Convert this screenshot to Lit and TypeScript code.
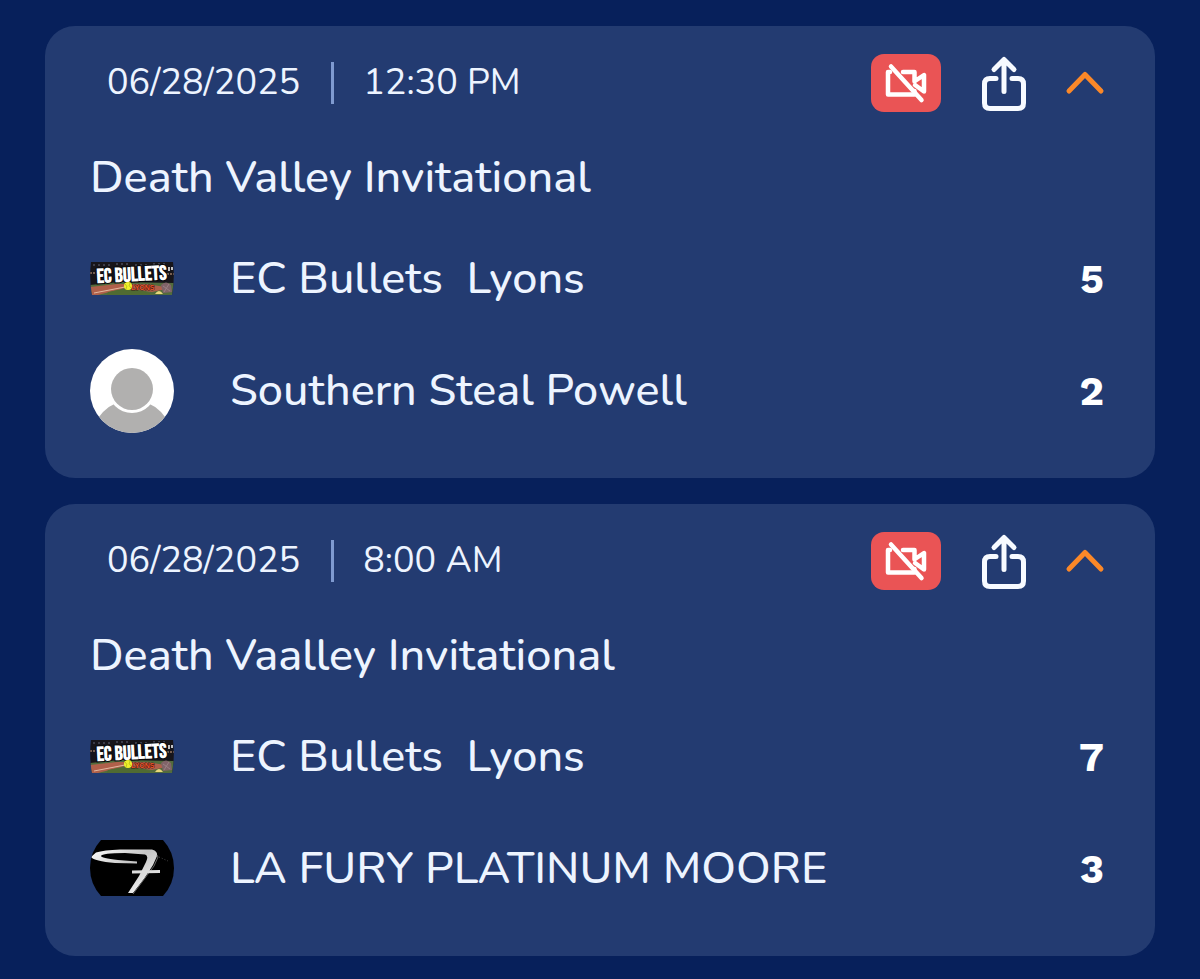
import { LitElement, html, css, svg } from 'lit';
import { customElement, property } from 'lit/decorators.js';

type Logo = 'bullets' | 'person' | 'fury';
interface Team { name: string; logo: Logo; score: number; }
interface Game { date: string; time: string; event: string; teams: Team[]; }

const GAMES: Game[] = [
  {
    date: '06/28/2025', time: '12:30 PM', event: 'Death Valley Invitational',
    teams: [
      { name: 'EC Bullets  Lyons', logo: 'bullets', score: 5 },
      { name: 'Southern Steal Powell', logo: 'person', score: 2 },
    ],
  },
  {
    date: '06/28/2025', time: '8:00 AM', event: 'Death Vaalley Invitational',
    teams: [
      { name: 'EC Bullets  Lyons', logo: 'bullets', score: 7 },
      { name: 'LA FURY PLATINUM MOORE', logo: 'fury', score: 3 },
    ],
  },
];

@customElement('team-logo')
export class TeamLogo extends LitElement {
  @property() kind: Logo = 'person';

  static styles = css`
    :host { display: block; width: 84px; height: 84px; }
    svg { display: block; width: 100%; height: 100%; }
    .wordmark { font-family: 'Bebas Neue', 'Oswald', 'Roboto Condensed', 'Liberation Sans', sans-serif; font-weight: 700; font-size: 20px; fill: #fff; }
    .script { font-family: 'Liberation Sans', sans-serif; font-weight: 700; font-size: 7px; fill: #f0562a; }
  `;

  private bullets() {
    return svg`
      <defs><clipPath id="c"><path d="M1 25H83Q85 42 82 58H2Q-1 42 1 25Z"/></clipPath></defs>
      <g clip-path="url(#c)">
        <rect y="25" width="84" height="34" fill="#17151a"/>
        <path d="M3 28H20M26 27H38M45 28H57M63 27H78" stroke="#626778" stroke-width="1" stroke-dasharray="2 3"/>
        <path d="M0 36H7M77 37H84" stroke="#765e50" stroke-width="2" stroke-dasharray="2 1"/>
        <path d="M0 48L30 45L84 46V60H0Z" fill="#536c3c"/>
        <path d="M0 50L27 47H57L81 51L62 55L35 51L8 58H0Z" fill="#b0604a"/>
        <path d="M4 56L35 50" fill="none" stroke="#e2b8a0" stroke-width="1"/>
        <path d="M18 55Q37 50 60 56V60H16Z" fill="#506b32"/>
        <path d="M71 48Q76 43 81 48L82 55L73 56Z" fill="#806468"/>
        <path d="M73 49L80 54M79 47L74 55" stroke="#9a8084" stroke-width="1"/>
        <path d="M65 57Q69 51 73 57Z" fill="#e8d77b"/>
        <text class="wordmark" x="7" y="46" transform="rotate(-3 7 46)" stroke="#08080a" stroke-width="2" paint-order="stroke">EC BULLETS</text>
        <path d="M79 30V34M82 30V33" stroke="#fff" stroke-width="1.5"/>
        <text class="script" x="41" y="53" stroke="#3a1710" stroke-width="1" paint-order="stroke">LYONS</text>
        <circle cx="38" cy="49" r="4" fill="#eef02b"/>
        <path d="M35 47Q38 49 36 52M40 46Q38 49 41 51" fill="none" stroke="#a9ad19" stroke-width=".7"/>
      </g>`;
  }

  private person() {
    return svg`
      <defs><clipPath id="c"><circle cx="42" cy="42" r="42"/></clipPath></defs>
      <g clip-path="url(#c)">
        <rect width="84" height="84" fill="#fff"/>
        <circle cx="42" cy="92" r="41" fill="#b1b0af"/>
        <circle cx="42" cy="40" r="24" fill="#fff"/>
        <circle cx="42" cy="40" r="21" fill="#b1b0af"/>
      </g>`;
  }

  private fury() {
    return svg`
      <defs>
        <clipPath id="c"><path d="M11 13H73Q84 25 84 41T73 69H11Q0 57 0 41T11 13Z"/></clipPath>
        <linearGradient id="g" x2="1" y2="1"><stop stop-color="#fff"/><stop offset=".45" stop-color="#c4c4c4"/><stop offset="1" stop-color="#fff"/></linearGradient>
      </defs>
      <g clip-path="url(#c)">
        <rect y="13" width="84" height="56" fill="#000"/>
        <path d="M1 30L6 25.500Q14 23 30 22.500H62Q68 24 67 29L63 38L54 52L43 66L38 66L49 49L56 35Q59 29 55 27.500L35 26Q12 26 11 29Q11 31 28 33L47 34.500V36.500L25 36Q4 34 1 30Z" fill="url(#g)"/>
        <path d="M67 28L68 30L64 39L55 51L43 67" fill="none" stroke="#666" stroke-width="1"/>
        <path d="M42 43.500L70 43V46L42 46.500Z" fill="#ddd"/>
        <path d="M69 30L78 34" stroke="#444" stroke-width="1" stroke-dasharray="1 2"/>
      </g>`;
  }

  render() {
    const art = this.kind === 'bullets' ? this.bullets() : this.kind === 'fury' ? this.fury() : this.person();
    return html`<svg viewBox="0 0 84 84" aria-hidden="true">${art}</svg>`;
  }
}

@customElement('game-card')
export class GameCard extends LitElement {
  @property({ attribute: false }) game!: Game;

  static styles = css`
    :host { display: block; }
    .card { background: #233b71; border-radius: 30px; padding: 28px 45px 45px; color: #edf4ff; }
    .header { display: flex; align-items: center; height: 58px; padding-left: 17px; }
    .when { display: flex; align-items: center; flex: 1; font-size: 36px; line-height: 48px; }
    .divider { width: 3px; height: 42px; margin: 0 29px 0 31px; background: #7f9ad0; }
    .actions { display: flex; align-items: center; }
    button { display: block; border: 0; padding: 0; background: none; cursor: pointer; }
    svg { display: block; }
    .video { width: 70px; height: 58px; border-radius: 13px; background: #ea5455; }
    .share { margin-left: 40px; }
    .toggle { margin: 0 5px 0 38px; }
    h2 { margin: 36px 0 29px; font-size: 45px; line-height: 60px; font-weight: 500; }
    ul { display: grid; gap: 28px; margin: 0; padding: 0; list-style: none; }
    li { display: flex; align-items: center; padding-right: 6px; }
    .name { flex: 1; margin-left: 56px; font-size: 45px; line-height: 60px; font-weight: 500; white-space: pre-wrap; }
    .score { font-family: 'Work Sans', Inter, sans-serif; font-size: 41px; line-height: 48px; font-weight: 700; color: #fff; }
  `;

  render() {
    const g = this.game;
    return html`
      <article class="card">
        <header class="header">
          <div class="when"><span>${g.date}</span><span class="divider"></span><span>${g.time}</span></div>
          <div class="actions">
            <button class="video" aria-label="Video unavailable">
              <svg width="70" height="58" viewBox="0 0 70 58" fill="none" stroke="#fff" stroke-width="4.500" stroke-linecap="round" stroke-linejoin="round">
                <path d="M19 18H17V40.500H43.500V37M32 18H43.500V27.500M44 27L53 21V37.500L44 31"/>
                <path d="M20 12.500L50.500 46"/>
              </svg>
            </button>
            <button class="share" aria-label="Share">
              <svg width="46" height="58" viewBox="0 0 46 58" fill="none" stroke="#f7faff" stroke-width="5" stroke-linecap="round" stroke-linejoin="round">
                <path d="M15 24.500H9Q3.500 24.500 3.500 30V49Q3.500 54.500 9 54.500H37Q42.500 54.500 42.500 49V30Q42.500 24.500 37 24.500H31"/>
                <path d="M23 37.500V6M13 15.500L23 5.500L33 15.500"/>
              </svg>
            </button>
            <button class="toggle" aria-label="Collapse">
              <svg width="40" height="58" viewBox="0 0 40 58" fill="none" stroke="#fb8828" stroke-width="5" stroke-linecap="round" stroke-linejoin="round">
                <path d="M4 37L20 20.500L36 37"/>
              </svg>
            </button>
          </div>
        </header>
        <h2>${g.event}</h2>
        <ul>
          ${g.teams.map(t => html`<li><team-logo .kind=${t.logo}></team-logo><span class="name">${t.name}</span><span class="score">${t.score}</span></li>`)}
        </ul>
      </article>`;
  }
}

@customElement('app-root')
export class AppRoot extends LitElement {
  static styles = css`
    :host { display: block; box-sizing: border-box; min-height: 100vh; padding: 26px 45px 23px; background: #07205b; font-family: Nunito, 'Nunito Sans', 'Open Sans', sans-serif; }
    main { display: grid; gap: 26px; }
  `;

  render() {
    return html`<main>${GAMES.map(g => html`<game-card .game=${g}></game-card>`)}</main>`;
  }
}
